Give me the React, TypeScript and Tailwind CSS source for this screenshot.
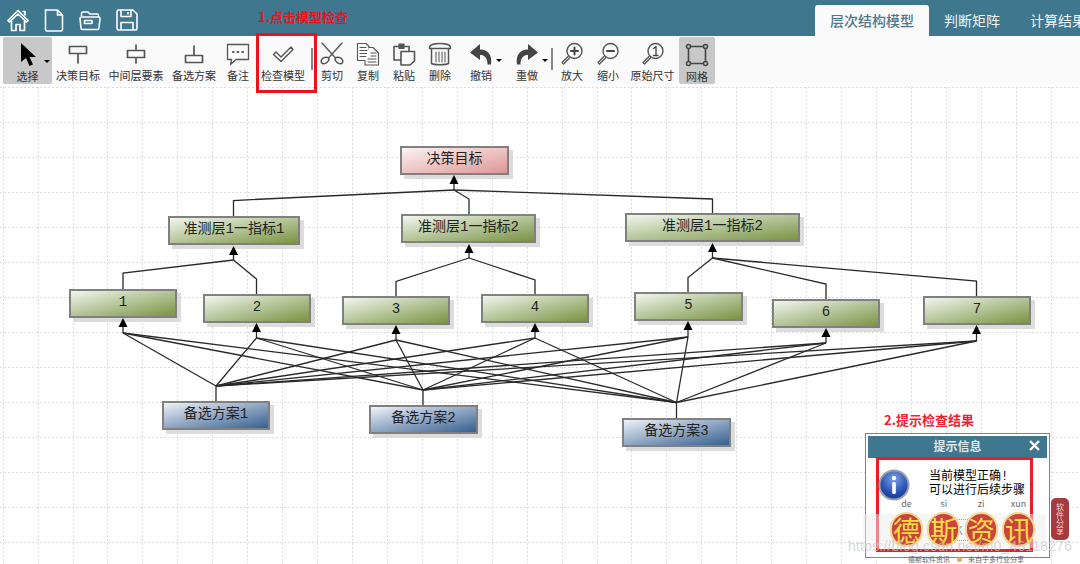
import type { ReactNode } from "react";

const sans = "font-['Noto_Sans_CJK_SC','Noto_Sans',sans-serif]";
const mono = "font-['Liberation_Mono','Noto_Sans_CJK_SC',monospace]";

type Pt = [number, number];

// page coordinates, the svg below is shifted by the toolbar height
const TOP = 84;

type DiagramNode = {
  label: string;
  pos: string;
  w: string;
  fill: string;
};

const green = "bg-gradient-to-br from-[#f3f6ee] to-[#7a9440]";

const nodes: DiagramNode[] = [
  { label: "决策目标", pos: "left-[400px] top-[62px]", w: "w-[109px]", fill: "bg-gradient-to-br from-[#fbf3f3] to-[#dc9796]" },
  { label: "准测层1一指标1", pos: "left-[168px] top-[132px]", w: "w-[132px]", fill: green },
  { label: "准测层1一指标2", pos: "left-[401px] top-[130px]", w: "w-[135px]", fill: green },
  { label: "准测层1一指标2", pos: "left-[625px] top-[129px]", w: "w-[175px]", fill: green },
  { label: "1", pos: "left-[69px] top-[205px]", w: "w-[108px]", fill: green },
  { label: "2", pos: "left-[203px] top-[210px]", w: "w-[108px]", fill: green },
  { label: "3", pos: "left-[342px] top-[212px]", w: "w-[108px]", fill: green },
  { label: "4", pos: "left-[481px] top-[210px]", w: "w-[108px]", fill: green },
  { label: "5", pos: "left-[634px] top-[208px]", w: "w-[109px]", fill: green },
  { label: "6", pos: "left-[772px] top-[215px]", w: "w-[108px]", fill: green },
  { label: "7", pos: "left-[923px] top-[212px]", w: "w-[108px]", fill: green },
  { label: "备选方案1", pos: "left-[162px] top-[317px]", w: "w-[108px]", fill: "bg-gradient-to-br from-[#f0f3f8] to-[#37608f]" },
  { label: "备选方案2", pos: "left-[369px] top-[321px]", w: "w-[109px]", fill: "bg-gradient-to-br from-[#f0f3f8] to-[#37608f]" },
  { label: "备选方案3", pos: "left-[622px] top-[334px]", w: "w-[109px]", fill: "bg-gradient-to-br from-[#f0f3f8] to-[#37608f]" },
];

const hubs: { tip: Pt; hub: number; kids: [number, number, number][] }[] = [
  { tip: [454, 175], hub: 190, kids: [[233.5, 200.5, 216], [469, 199, 214], [712.5, 199, 213]] },
  { tip: [233.5, 246], hub: 260, kids: [[123, 273, 289], [256.5, 279, 294]] },
  { tip: [469, 244], hub: 258, kids: [[396, 281.5, 296], [535, 280, 294]] },
  { tip: [712.5, 243], hub: 258, kids: [[688, 277.5, 292], [826, 284, 299], [976.5, 281, 296]] },
];

const criteria: Pt[] = [
  [123, 333],
  [256.5, 338],
  [396, 340],
  [535, 338],
  [688, 337],
  [826, 343],
  [976.5, 341],
];
const criteriaTips = [318, 323, 325, 323, 321, 328, 325];

const options: { x: number; hub: number; bottom: number }[] = [
  { x: 216, hub: 386, bottom: 401 },
  { x: 423, hub: 390, bottom: 405 },
  { x: 676.5, hub: 402.5, bottom: 418 },
];

function Arrow({ x, y }: { x: number; y: number }) {
  return <polygon fill="#000" points={`${x},${y - TOP} ${x - 4.5},${y + 9 - TOP} ${x + 4.5},${y + 9 - TOP}`} />;
}

function Connectors() {
  const vLines = Array.from({ length: 31 }, (_, i) => Math.round(2.7 + i * 34.93) + 0.5);
  const hLines = Array.from({ length: 14 }, (_, i) => 3.5 + i * 35);
  return (
    <svg className="absolute inset-0" fill="none" height="480" width="1080">
      <g stroke="#dcdcdc" strokeDasharray="2 2">
        {vLines.map((x) => (
          <line key={x} x1={x} x2={x} y1="3" y2="480" />
        ))}
        {hLines.map((y) => (
          <line key={y} x1="0" x2="1080" y1={y} y2={y} />
        ))}
      </g>
      <g stroke="#2a2a2a" strokeWidth="1.3">
        {hubs.map((h) => (
          <g key={h.tip[0]}>
            <path d={`M${h.tip[0]} ${h.tip[1] - TOP}V${h.hub - TOP}`} />
            {h.kids.map(([x, bend, end]) => (
              <path d={`M${h.tip[0]} ${h.hub - TOP}L${x} ${bend - TOP}V${end - TOP}`} key={x} />
            ))}
          </g>
        ))}
        {criteria.map(([x, y], i) => (
          <path d={`M${x} ${criteriaTips[i] - TOP}V${y - TOP}`} key={x} />
        ))}
        {options.map((o) => (
          <g key={o.x}>
            <path d={`M${o.x} ${o.bottom - TOP}V${o.hub - TOP}`} />
            {criteria.map(([x, y]) => (
              <path d={`M${o.x} ${o.hub - TOP}L${x} ${y - TOP}`} key={x} />
            ))}
          </g>
        ))}
      </g>
    </svg>
  );
}

// arrowheads sit on the node shadows, so they get their own layer
function Arrowheads() {
  return (
    <svg className="absolute inset-0" height="480" width="1080">
      {hubs.map((h) => (
        <Arrow key={h.tip[0]} x={h.tip[0]} y={h.tip[1]} />
      ))}
      {criteria.map(([x], i) => (
        <Arrow key={x} x={x} y={criteriaTips[i]} />
      ))}
    </svg>
  );
}

function Ico({ children, w = 24 }: { children: ReactNode; w?: number }) {
  return (
    <svg fill="none" height="24" stroke="#555" strokeLinecap="round" strokeLinejoin="round" strokeWidth="1.5" viewBox="0 0 24 24" width={w}>
      {children}
    </svg>
  );
}

const tools: { label: string; w: string; icon: ReactNode; on?: boolean; caret?: boolean; sep?: boolean }[] = [
  {
    label: "选择",
    w: "w-[49px]",
    on: true,
    caret: true,
    icon: (
      <Ico>
        <path d="M5 0V19L10 15L13.5 23L17 21.5L13.5 14H20Z" fill="#000" stroke="none" />
      </Ico>
    ),
  },
  {
    label: "决策目标",
    w: "w-[52px]",
    icon: (
      <Ico>
        <path d="M3.5 4.5H20.5V11.5H3.5ZM12 11.5V21" strokeWidth="1.7" />
      </Ico>
    ),
  },
  {
    label: "中间层要素",
    w: "w-[64px]",
    icon: (
      <Ico>
        <path d="M3.5 8.5H20.5V15.5H3.5ZM12 3V8.5M12 15.5V21" strokeWidth="1.7" />
      </Ico>
    ),
  },
  {
    label: "备选方案",
    w: "w-[52px]",
    icon: (
      <Ico>
        <path d="M3.5 13.5H20.5V20.5H3.5ZM12 4V13.5" strokeWidth="1.7" />
      </Ico>
    ),
  },
  {
    label: "备注",
    w: "w-[36px]",
    icon: (
      <Ico>
        <path d="M1.5 2.5H22.5V17.5H10L4.5 22.5L5.5 17.5H1.5Z" strokeWidth="1.3" />
        <path d="M7 10H7.6M11.7 10H12.3M16.4 10H17" strokeWidth="2.2" />
      </Ico>
    ),
  },
  {
    label: "检查模型",
    w: "w-[54px]",
    sep: true,
    icon: (
      <Ico>
        <path d="M2.5 12.5L5 10L10 15L20 5L22 7.5L10 19.5Z" strokeWidth="1.4" />
      </Ico>
    ),
  },
  {
    label: "剪切",
    w: "w-[36px]",
    icon: (
      <Ico>
        <path d="M2 1L15.5 16M22 1L8.5 16" strokeWidth="1.3" />
        <path d="M8.5 16C6.5 14.5 2.5 15.5 1.5 18C.5 21 3 23 6 21C8.5 19.5 9.5 17.5 8.5 16ZM15.5 16C17.5 14.5 21.5 15.5 22.5 18C23.5 21 21 23 18 21C15.5 19.5 14.5 17.5 15.5 16Z" strokeWidth="1.5" />
      </Ico>
    ),
  },
  {
    label: "复制",
    w: "w-[36px]",
    icon: (
      <Ico>
        <path d="M1.5 1.5H10L13 4.5V18.5H1.5Z" fill="#fafafa" strokeWidth="1.1" />
        <path d="M4 5.5H10M4 8.5H11M4 11.5H11M4 14.5H11" strokeWidth="1" />
        <path d="M13 5.5H17L22.5 11V23H9V18.5" fill="#fafafa" strokeWidth="1.1" />
        <path d="M15 11H20M15 14H20M12 17H20M12 20H20" strokeWidth="1" />
      </Ico>
    ),
  },
  {
    label: "粘贴",
    w: "w-[36px]",
    icon: (
      <Ico>
        <path d="M2 4.5H17V18H2Z" strokeWidth="1.6" />
        <path d="M7 2H12V6.5H7Z" fill="#555" strokeWidth="1.2" />
        <path d="M9 9.5H22.5V19L18 23H9Z" fill="#fafafa" strokeWidth="1.6" />
      </Ico>
    ),
  },
  {
    label: "删除",
    w: "w-[36px]",
    icon: (
      <Ico>
        <path d="M1.5 5C2 2.5 8 1.5 12 1.5C16 1.5 22 2.5 22.5 5V6.5H1.5Z" strokeWidth="1.4" />
        <path d="M3.5 6.5V21.5C6 23 18 23 20.5 21.5V6.5" strokeWidth="1.5" />
        <path d="M8 10V20M11 10V20M14 10V20M17 10V20" strokeWidth="1" />
      </Ico>
    ),
  },
  {
    label: "撤销",
    w: "w-[46px]",
    caret: true,
    icon: (
      <Ico>
        <path d="M11 2L1 10.5L11 18V13C15.5 13 18.5 15.5 18.5 22.5H22C23.5 13 19 7.5 11 7.5Z" fill="#444" stroke="none" />
      </Ico>
    ),
  },
  {
    label: "重做",
    w: "w-[46px]",
    sep: true,
    caret: true,
    icon: (
      <Ico>
        <path d="M13 2L23 10.5L13 18V13C8.5 13 5.5 15.5 5.5 22.5H2C.5 13 5 7.5 13 7.5Z" fill="#444" stroke="none" />
      </Ico>
    ),
  },
  {
    label: "放大",
    w: "w-[36px]",
    icon: (
      <Ico>
        <circle cx="14.5" cy="9" r="7.5" strokeWidth="1.4" />
        <path d="M14.5 5.5V12.5M11 9H18" stroke="#444" strokeWidth="2" />
        <path d="M8 14.5L2 20.5L3.5 22L9.5 16" strokeWidth="1.4" />
      </Ico>
    ),
  },
  {
    label: "缩小",
    w: "w-[36px]",
    icon: (
      <Ico>
        <circle cx="14.5" cy="9" r="7.5" strokeWidth="1.4" />
        <path d="M11 9H18" stroke="#444" strokeWidth="2" />
        <path d="M8 14.5L2 20.5L3.5 22L9.5 16" strokeWidth="1.4" />
      </Ico>
    ),
  },
  {
    label: "原始尺寸",
    w: "w-[53px]",
    icon: (
      <Ico>
        <circle cx="14.5" cy="9" r="7.5" strokeWidth="1.4" />
        <path d="M12.5 6.5L15 4.5V13.5M12.5 13.5H17" stroke="#444" strokeWidth="1.3" />
        <path d="M8 14.5L2 20.5L3.5 22L9.5 16" strokeWidth="1.4" />
      </Ico>
    ),
  },
  {
    label: "网格",
    w: "w-[36px]",
    on: true,
    icon: (
      <Ico>
        <path d="M3.5 3.5H20.5V20.5H3.5Z" stroke="#444" strokeWidth="1.6" />
        <g fill="#c8c8c8" stroke="#444" strokeWidth="1.5">
          <circle cx="3.5" cy="3.5" r="2" />
          <circle cx="20.5" cy="3.5" r="2" />
          <circle cx="3.5" cy="20.5" r="2" />
          <circle cx="20.5" cy="20.5" r="2" />
        </g>
      </Ico>
    ),
  },
];

function Toolbar() {
  return (
    <div className={`flex h-[48px] shrink-0 bg-[#fafafa] pl-[3px] ${sans}`}>
      {tools.map((t) => (
        <div className="flex" key={t.label}>
          <div className={`relative flex h-[47px] flex-col items-center rounded-[2px] pt-[4px] ${t.w} ${t.on ? "mt-px bg-[#c8c8c8]" : ""}`}>
            <div className="flex h-[28px] items-center justify-center">{t.icon}</div>
            {t.caret && <span className="absolute right-[2px] top-[23px] h-0 w-0 border-x-[3px] border-t-[3px] border-x-transparent border-t-black" />}
            <span className="whitespace-nowrap text-[11px] leading-[14px] text-[#333]">{t.label}</span>
          </div>
          {t.sep && <span className="mx-[1px] mt-[12px] h-[22px] w-[2px] bg-[#888]" />}
        </div>
      ))}
    </div>
  );
}

function Header() {
  return (
    <header className={`flex h-[36px] shrink-0 bg-[#3f778f] ${sans}`}>
      <div className="flex items-center gap-[15px] pl-[7px] pt-[4px]">
        <svg fill="none" height="23" stroke="#fff" strokeLinejoin="round" strokeWidth="1.7" viewBox="0 0 22 23" width="22">
          <path d="M1 11.5L11 1.5L21 11.5L19.5 13L11 5L2.5 13ZM4.5 12V21.5H9V15.5H13V21.5H17.5V12" />
          <path d="M15.5 2.5H18V6.5" />
        </svg>
        <svg fill="none" height="23" stroke="#fff" strokeLinejoin="round" strokeWidth="1.6" viewBox="0 0 20 23" width="20">
          <path d="M1.5 1H13.5L18.5 6V20.5Q18.5 22 17 22H3Q1.5 22 1.5 20.5ZM13.5 1V6H18.5" />
        </svg>
        <svg fill="none" height="21" stroke="#fff" strokeLinejoin="round" strokeWidth="1.6" viewBox="0 0 22 21" width="22">
          <path d="M2.5 6V3.5Q2.5 2 4 2H9L11 4H18Q19.5 4 19.5 5.5V7" />
          <path d="M1 8.5Q1 7 2.5 7H19.5Q21 7 21 8.5L20 18Q20 19.5 18.5 19.5H3.5Q2 19.5 2 18Z" />
          <path d="M5.5 10.5H13V13.5H5.5Z" />
        </svg>
        <svg fill="none" height="22" stroke="#fff" strokeLinejoin="round" strokeWidth="1.6" viewBox="0 0 22 22" width="22">
          <path d="M1 2.5Q1 1 2.5 1H17L21 5V19.5Q21 21 19.5 21H2.5Q1 21 1 19.5Z" />
          <path d="M5 1V7.5H15V1M12 3V5.5M5 21V13.5H17V21" />
        </svg>
      </div>
      <nav className="ml-auto flex w-[265px] shrink-0 items-end overflow-hidden text-[14px] leading-[31px]">
        <span className="h-[31px] w-[114px] shrink-0 rounded-t-[3px] bg-[#fafafa] text-center font-medium text-[#50788c]">层次结构模型</span>
        <span className="ml-[15px] w-[70px] shrink-0 whitespace-nowrap text-[#eef3f5]">判断矩阵</span>
        <span className="ml-[16px] shrink-0 whitespace-nowrap text-[#eef3f5]">计算结果</span>
      </nav>
    </header>
  );
}

function InfoIcon() {
  return (
    <svg height="32" viewBox="0 0 32 32" width="32">
      <defs>
        <radialGradient cx="50%" cy="30%" id="infoFill" r="75%">
          <stop offset="0" stopColor="#7fa4e4" />
          <stop offset="0.6" stopColor="#2a54b8" />
          <stop offset="1" stopColor="#16307f" />
        </radialGradient>
      </defs>
      <circle cx="16" cy="16" fill="url(#infoFill)" r="14.5" stroke="#9a9fa8" strokeWidth="2" />
      <circle cx="16" cy="9" fill="#fff" r="2.2" />
      <rect fill="#fff" height="12" rx="1.5" width="3.6" x="14.2" y="13" />
    </svg>
  );
}

function Dialog() {
  const brand = [
    { py: "de", ch: "德" },
    { py: "si", ch: "斯" },
    { py: "zi", ch: "资" },
    { py: "xun", ch: "讯" },
  ];
  return (
    <div className={`absolute left-[865px] top-[433px] h-[125px] w-[185px] border border-[#5f8ea3] bg-white p-[2px] ${sans}`}>
      <div className="relative flex h-[22px] items-center justify-center bg-[#3f778f] pb-[3px] text-[12px] font-bold text-[#dfeaef]">
        提示信息
        <svg className="absolute right-[7px] top-[4px]" fill="none" height="11" stroke="#fff" strokeWidth="2.4" viewBox="0 0 11 11" width="11">
          <path d="M1 1L10 10M10 1L1 10" />
        </svg>
      </div>
      <div className="relative -mt-px ml-[8px] h-[95px] w-[157px] border-[3px] border-[#ee1c25]">
        <div className="flex pt-[9px]">
          <div className="-ml-px shrink-0">
            <InfoIcon />
          </div>
          <p className={`ml-[19px] whitespace-nowrap pt-[1px] text-[12px] leading-[14px] text-black ${mono}`}>
            当前模型正确!
            <br />
            可以进行后续步骤
          </p>
        </div>
        <div className="mx-auto mt-[18px] flex h-[22px] w-[46px] items-center justify-center border border-dotted border-[#555] text-[12px] text-[#444]">OK</div>
      </div>
      <div className="absolute left-[-3px] top-[80px] h-[34px] w-[183px] bg-[#eeeeee]/50" />
      <div className="absolute left-[24px] top-[64px] flex w-[145px] justify-between">
        {brand.map((b) => (
          <div className="flex w-[33px] flex-col items-center" key={b.py}>
            <span className="text-[9px] leading-[12px] text-[#666]">{b.py}</span>
            <span className="mt-[2px] flex h-[35px] w-[33px] items-center justify-center rounded-full border-2 border-[#f2d691] bg-[#c9443c] text-[27px] leading-none text-[#ffdc45]">
              {b.ch}
            </span>
          </div>
        ))}
      </div>
    </div>
  );
}

export default function App() {
  return (
    <div className="relative flex h-[564px] w-[1080px] flex-col overflow-hidden bg-white">
      <Header />
      <Toolbar />
      <main className="relative flex-1">
        <Connectors />
        {nodes.map((n) => (
          <div
            className={`absolute flex h-[29px] items-center justify-center border-2 border-[#808080] pb-[2px] text-[14px] text-[#222] shadow-[4px_4px_0_#dcdcdc] ${mono} ${n.pos} ${n.w} ${n.fill}`}
            key={n.pos}
          >
            {n.label}
          </div>
        ))}
        <Arrowheads />
      </main>

      {/* annotations on top of the screenshot */}
      <span className={`absolute left-[258px] top-[8px] text-[13px] font-bold leading-[18px] text-[#e8141c] ${sans}`}>1.点击模型检查</span>
      <div className="absolute left-[256px] top-[33px] h-[60px] w-[61px] border-[3px] border-[#e8141c]" />
      <span className={`absolute left-[884px] top-[411px] text-[13px] font-bold leading-[18px] text-[#f2222c] ${sans}`}>2.提示检查结果</span>
      <Dialog />

      <div className={`absolute left-[1051px] top-[498px] flex h-[42px] w-[18px] items-center justify-center rounded-[5px] bg-[#a63a3c] text-[8px] leading-[9px] text-[#f0d8c8] [writing-mode:vertical-rl] ${sans}`}>
        软件分享
      </div>
      <div className={`absolute left-[908px] top-[555px] flex w-[116px] items-center justify-between text-[7px] leading-[9px] text-[#666] ${sans}`}>
        <span>德斯软件资讯</span>
        <span className="h-[5px] w-[5px] rounded-full bg-[#e0b050]" />
        <span>来自于多行业分享</span>
      </div>
      <span className="absolute left-[848px] top-[536px] whitespace-nowrap font-['Liberation_Sans',sans-serif] text-[14px] leading-[20px] tracking-[0.2px] text-[#c8c8c8]/70">
        https://blog.csdn.net/m0_46118276
      </span>
    </div>
  );
}
